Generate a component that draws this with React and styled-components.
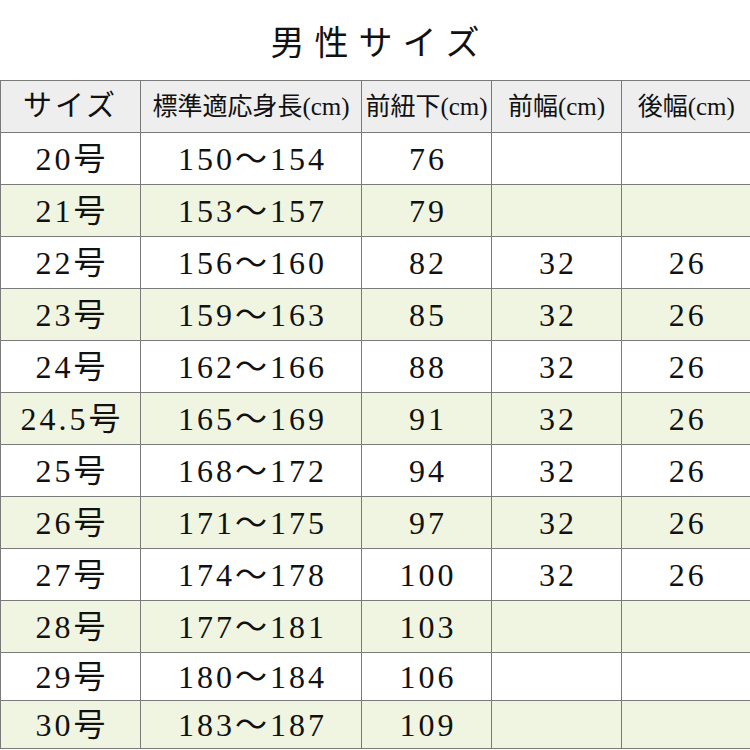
import React from 'react';
import styled, { createGlobalStyle } from 'styled-components';

const GlobalStyle = createGlobalStyle`
  body {
    margin: 0;
    background: #fff;
    font-family: "Liberation Serif", "Noto Sans CJK JP", serif;
    color: #111;
  }
`;

const Page = styled.div`
  width: 750px;
  height: 750px;
  overflow: hidden;
  display: flex;
  flex-direction: column;
`;

const Title = styled.h1`
  margin: 0;
  height: 80px;
  display: flex;
  align-items: center;
  justify-content: center;
  font-size: 34px;
  font-weight: 400;
  letter-spacing: 10px;
  padding-left: 10px;
`;

const Table = styled.table`
  width: 750px;
  border-collapse: collapse;
  table-layout: fixed;
`;

const HeadCell = styled.th`
  height: 51px;
  background: #eeeeee;
  border: 1px solid #7a7a7a;
  border-right: ${(p) => (p.$last ? 'none' : '1px solid #7a7a7a')};
  font-weight: 400;
  font-size: ${(p) => (p.$big ? '29px' : '25px')};
  letter-spacing: ${(p) => (p.$big ? '3px' : '0')};
  padding: 0;
  line-height: 1;
  white-space: nowrap;
  text-align: center;
`;

const Row = styled.tr`
  height: ${(p) => p.$h}px;
  background: ${(p) => (p.$alt ? '#f0f5e1' : '#ffffff')};
`;

const Cell = styled.td`
  border: 1px solid #7a7a7a;
  border-right: ${(p) => (p.$last ? 'none' : '1px solid #7a7a7a')};
  font-size: 32px;
  line-height: 1;
  text-align: center;
  padding: 0 0 0 3px;
  letter-spacing: 3px;
  white-space: nowrap;
`;

const cols = [140, 221, 130, 130, 129];

const rows = [
  ['20号', '150〜154', '76', '', ''],
  ['21号', '153〜157', '79', '', ''],
  ['22号', '156〜160', '82', '32', '26'],
  ['23号', '159〜163', '85', '32', '26'],
  ['24号', '162〜166', '88', '32', '26'],
  ['24.5号', '165〜169', '91', '32', '26'],
  ['25号', '168〜172', '94', '32', '26'],
  ['26号', '171〜175', '97', '32', '26'],
  ['27号', '174〜178', '100', '32', '26'],
  ['28号', '177〜181', '103', '', ''],
  ['29号', '180〜184', '106', '', ''],
  ['30号', '183〜187', '109', '', ''],
];

const heads = ['サイズ', '標準適応身長(cm)', '前紐下(cm)', '前幅(cm)', '後幅(cm)'];

export default function App() {
  return (
    <Page>
      <GlobalStyle />
      <Title>男性サイズ</Title>
      <Table>
        <colgroup>
          {cols.map((w, i) => (
            <col key={i} style={{ width: w }} />
          ))}
        </colgroup>
        <thead>
          <tr>
            {heads.map((h, i) => (
              <HeadCell key={h} $big={i === 0} $last={i === heads.length - 1}>
                {h}
              </HeadCell>
            ))}
          </tr>
        </thead>
        <tbody>
          {rows.map((r, i) => (
            <Row key={r[0]} $alt={i % 2 === 1} $h={i >= 10 ? 48 : 52}>
              {r.map((c, j) => (
                <Cell key={j} $last={j === r.length - 1}>
                  {c}
                </Cell>
              ))}
            </Row>
          ))}
        </tbody>
      </Table>
    </Page>
  );
}
